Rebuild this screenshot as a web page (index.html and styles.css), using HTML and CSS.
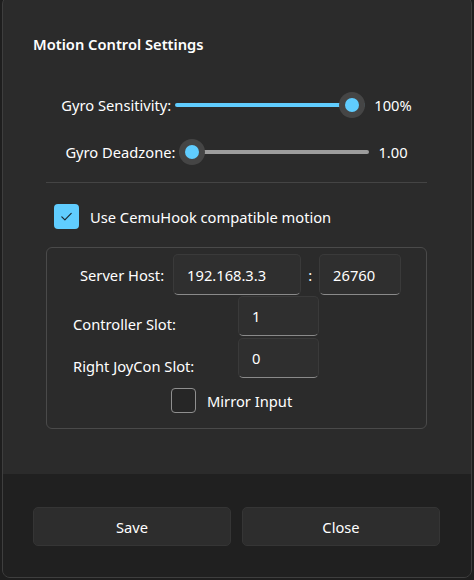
FILE: index.html
```html
<!DOCTYPE html>
<html>
<head>
<meta charset="utf-8">
<link rel="stylesheet" href="styles.css">
</head>
<body>
<div class="dialog">
  <div class="content">
    <div class="title">Motion Control Settings</div>
    <div class="slider-row">
      <span class="label">Gyro Sensitivity:</span>
      <div class="slider">
        <div class="track"><div class="fill" style="width:100%"></div></div>
        <div class="thumb" style="left:164px"><span class="dot"></span></div>
      </div>
      <span class="value">100%</span>
    </div>
    <div class="slider-row row2">
      <span class="label">Gyro Deadzone:</span>
      <div class="slider">
        <div class="track"><div class="fill" style="width:0%"></div></div>
        <div class="thumb" style="left:0px"><span class="dot"></span></div>
      </div>
      <span class="value">1.00</span>
    </div>
    <div class="separator"></div>
    <div class="check-row main-check">
      <span class="checkbox checked">
        <svg width="25" height="25" viewBox="0 0 25 25"><path d="M7.8 12.8 L10.9 15.9 L17.2 9.4" fill="none" stroke="#1b2a33" stroke-width="1.2" stroke-linecap="round" stroke-linejoin="round"/></svg>
      </span>
      <span class="check-label">Use CemuHook compatible motion</span>
    </div>
    <div class="group">
      <div class="host-row">
        <span class="label">Server Host:</span>
        <div class="textbox host">192.168.3.3</div>
        <span class="colon">:</span>
        <div class="textbox port">26760</div>
      </div>
      <div class="slot-row first">
        <span class="slot-label">Controller Slot:</span>
        <div class="textbox slot">1</div>
      </div>
      <div class="slot-row">
        <span class="slot-label">Right JoyCon Slot:</span>
        <div class="textbox slot">0</div>
      </div>
      <div class="check-row mirror">
        <span class="checkbox"></span>
        <span class="check-label">Mirror Input</span>
      </div>
    </div>
  </div>
  <div class="footer">
    <button class="btn">Save</button>
    <button class="btn">Close</button>
  </div>
</div>
</body>
</html>
```
FILE: styles.css
```css
html, body {
  margin: 0;
  padding: 0;
}
body {
  width: 474px;
  height: 580px;
  overflow: hidden;
  background: #1e1e1e;
  font-family: "Noto Sans", "Open Sans", sans-serif;
  font-size: 14.7px;
  color: #ffffff;
}
.dialog {
  box-sizing: border-box;
  margin: -4px 2px 0 2px;
  height: 582px;
  border: 1px solid #3e3e3e;
  border-radius: 8px;
  background: #2b2b2b;
  display: flex;
  flex-direction: column;
  overflow: hidden;
}
.content {
  flex: 1;
  padding: 37px 31px 0 30px;
}
.title {
  font-size: 14.7px;
  font-weight: 600;
  line-height: 20px;
}
.slider-row {
  display: flex;
  align-items: center;
  justify-content: center;
  height: 26px;
  margin-top: 38px;
}
.slider-row.row2 {
  margin-top: 21px;
}
.slider-row .label {
  margin-right: 4px;
  line-height: 20px;
}
.slider-row .value {
  margin-left: 9px;
  line-height: 20px;
}
.slider {
  position: relative;
  width: 190px;
  height: 26px;
}
.track {
  position: absolute;
  left: 0;
  right: 0;
  top: 11px;
  height: 4px;
  border-radius: 2px;
  background: #9d9d9d;
  overflow: hidden;
}
.fill {
  height: 100%;
  background: #60cdff;
}
.thumb {
  position: absolute;
  top: 0;
  width: 26px;
  height: 26px;
  border-radius: 50%;
  background: #454545;
  display: flex;
  align-items: center;
  justify-content: center;
}
.dot {
  width: 14px;
  height: 14px;
  border-radius: 50%;
  background: #60cdff;
}
.separator {
  height: 1px;
  background: #444444;
  margin: 17px 13px 0 13px;
}
.check-row {
  display: flex;
  align-items: center;
}
.main-check {
  margin: 21px 0 0 21px;
}
.checkbox {
  box-sizing: border-box;
  width: 25px;
  height: 25px;
  border-radius: 4px;
  border: 1px solid #8f8f8f;
  background: #262626;
  flex: none;
}
.checkbox.checked {
  border: none;
  background: #60cdff;
}
.checkbox svg {
  display: block;
}
.check-label {
  margin-left: 11px;
  line-height: 20px;
}
.group {
  margin: 18px 13px 0 13px;
  border: 1px solid #4a4a4a;
  border-radius: 6px;
  padding: 6px 0 15px 0;
}
.host-row {
  display: flex;
  align-items: center;
  padding-left: 33px;
}
.host-row .label {
  margin-right: 9px;
}
.textbox {
  box-sizing: border-box;
  height: 41px;
  background: #2f2f2f;
  border: 1px solid #3a3a3a;
  border-bottom-color: #8a8a8a;
  border-radius: 5px;
  padding-left: 13px;
  display: flex;
  align-items: center;
  color: #ffffff;
}
.textbox.host {
  width: 128px;
}
.textbox.port {
  width: 82px;
}
.colon {
  width: 18px;
  text-align: center;
}
.slot-row {
  display: flex;
  align-items: flex-end;
  padding-left: 26px;
  margin-top: 1px;
}
.slot-row + .slot-row {
  margin-top: 2px;
}
.slot-label {
  width: 165px;
  line-height: 20px;
  margin-bottom: 2px;
}
.textbox.slot {
  width: 81px;
  height: 40px;
  padding-bottom: 1px;
}
.mirror {
  margin: 10px 0 0 124px;
}
.footer {
  height: 103px;
  flex: none;
  background: #202020;
  box-sizing: border-box;
  padding: 33px 31px 0 30px;
  display: flex;
  gap: 11px;
  align-items: flex-start;
}
.btn {
  flex: 1;
  height: 39px;
  background: #2d2d2d;
  border: 1px solid #353535;
  border-radius: 5px;
  color: #ffffff;
  font-family: "Noto Sans", "Open Sans", sans-serif;
  font-size: 14.7px;
  padding: 0;
}
```
